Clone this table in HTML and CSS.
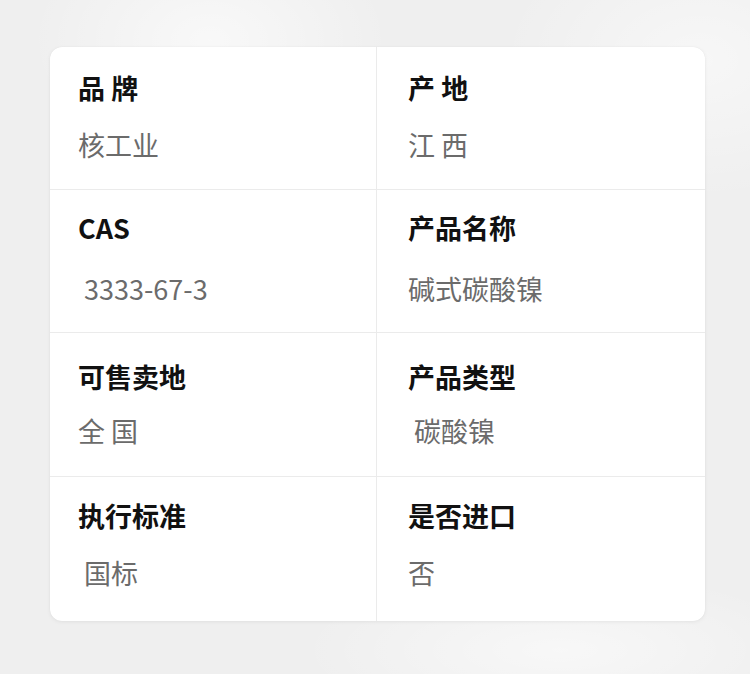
FILE: index.html
```html
<!DOCTYPE html>
<html lang="zh">
<head>
<meta charset="utf-8">
<link rel="stylesheet" href="styles.css">
</head>
<body>
<div class="page">
  <div class="card">
    <div class="cell"><div class="label">品 牌</div><div class="value">核工业</div></div>
    <div class="cell"><div class="label">产 地</div><div class="value">江 西</div></div>
    <div class="cell r2"><div class="label">CAS</div><div class="value ind">3333-67-3</div></div>
    <div class="cell r2"><div class="label">产品名称</div><div class="value">碱式碳酸镍</div></div>
    <div class="cell r3"><div class="label">可售卖地</div><div class="value">全 国</div></div>
    <div class="cell r3"><div class="label">产品类型</div><div class="value ind">碳酸镍</div></div>
    <div class="cell r4"><div class="label">执行标准</div><div class="value ind">国标</div></div>
    <div class="cell r4"><div class="label">是否进口</div><div class="value">否</div></div>
  </div>
</div>
</body>
</html>
```
FILE: styles.css
```css
html, body {
  margin: 0;
  padding: 0;
}
body {
  width: 750px;
  height: 674px;
  overflow: hidden;
  font-family: "Noto Sans CJK SC", "Noto Sans", sans-serif;
  background:
    radial-gradient(ellipse 180px 120px at 210px 40px, rgba(255,255,255,0.6), rgba(255,255,255,0)),
    radial-gradient(ellipse 200px 140px at 700px 60px, rgba(255,255,255,0.5), rgba(255,255,255,0)),
    radial-gradient(ellipse 260px 80px at 560px 650px, rgba(255,255,255,0.55), rgba(255,255,255,0)),
    #efefef;
}
.page {
  padding: 47px 45px 0 50px;
}
.card {
  width: 655px;
  height: 574px;
  background: #fff;
  border-radius: 12px;
  box-shadow: 0 1px 4px rgba(0,0,0,0.06), 0 0 1px rgba(0,0,0,0.08);
  display: grid;
  grid-template-columns: 327px 328px;
  grid-template-rows: 143px 143px 144px 144px;
  overflow: hidden;
}
.cell {
  padding: 25px 0 0 28px;
  border-bottom: 1px solid #ebebeb;
  box-sizing: border-box;
}
.cell:nth-child(odd) {
  border-right: 1px solid #ebebeb;
}
.cell:nth-child(even) {
  padding-left: 31px;
}
.cell.r4 {
  border-bottom: none;
}
.cell.r2 { padding-top: 22px; }
.cell.r3 { padding-top: 28px; }
.cell.r4 { padding-top: 23px; }
.label {
  font-size: 27px;
  line-height: 32px;
  font-weight: 700;
  color: #111;
}
.value {
  margin-top: 25px;
  font-size: 27px;
  line-height: 32px;
  color: #6b6b6b;
}
.r2 .value { margin-top: 29px; }
.r3 .value { margin-top: 22px; }
.r4 .value { margin-top: 25px; }
.value.ind {
  padding-left: 6px;
}
```
